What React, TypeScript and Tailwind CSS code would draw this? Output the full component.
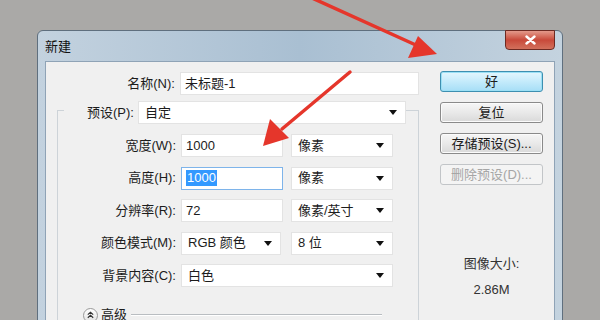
import React from "react";

const font = "font-['Liberation_Sans','Noto_Sans_CJK_SC',sans-serif]";

function Arrow() {
    return (
        <svg className="w-[8px] h-[5px] ml-auto" viewBox="0 0 8 5">
            <path d="M0 0h8L4 5z" fill="#111" />
        </svg>
    );
}

function Field({ value, width, focused }: { value: string; width: string; focused?: boolean }) {
    return (
        <div
            className={`${width} h-[23px] bg-white flex items-center pl-[4px] border ${
                focused ? "border-[#7eb4ea]" : "border-[#e3e3e3]"
            }`}
        >
            {focused ? (
                <span className="bg-[#3399ff] text-white leading-[16px] px-[1px]">{value}</span>
            ) : (
                <span>{value}</span>
            )}
        </div>
    );
}

function Select({ value, width }: { value: string; width: string }) {
    return (
        <div className={`${width} h-[23px] bg-white border border-[#e3e3e3] flex items-center pl-[6px] pr-[8px]`}>
            <span>{value}</span>
            <Arrow />
        </div>
    );
}

function Row({ label, children }: { label: string; children: React.ReactNode }) {
    return (
        <div className="flex items-center h-[23px]">
            <div className="w-[123px] text-right pr-[5px] whitespace-nowrap">{label}</div>
            {children}
        </div>
    );
}

function Button({ label, primary, disabled }: { label: string; primary?: boolean; disabled?: boolean }) {
    const base = "w-[103px] h-[21px] rounded-[3px] flex items-center justify-center border";
    if (primary) {
        return (
            <div className={`${base} border-[#3d8fb0] bg-gradient-to-b from-[#e4f6fd] via-[#c4ebfb] to-[#a6def6] shadow-[inset_0_0_0_1px_#9be0f5]`}>
                {label}
            </div>
        );
    }
    if (disabled) {
        return <div className={`${base} border-[#c2c5c8] bg-[#f4f4f4] text-[#a6a6a6]`}>{label}</div>;
    }
    return (
        <div className={`${base} border-[#8a8a8a] bg-gradient-to-b from-[#f6f6f6] via-[#e9e9e9] to-[#d9d9d9] shadow-[inset_0_0_0_1px_#fbfbfb]`}>
            {label}
        </div>
    );
}

export default function App() {
    return (
        <div className={`relative w-[600px] h-[320px] overflow-hidden bg-[#aaa9a7] pl-[37px] pt-[30px] ${font} text-[13px] text-[#1c1c1c]`}>
            {/* window */}
            <div className="w-[526px] h-[300px] rounded-t-[6px] border border-[#5f6f7e] bg-gradient-to-r from-[#c3d2df] via-[#a9bfd2] to-[#c4d3df] px-[7px]">
                {/* title bar */}
                <div className="flex items-start h-[30px]">
                    <div className="pt-[6px] text-[#111]">新建</div>
                    <div className="ml-auto -mt-[1px] w-[50px] h-[20px] rounded-b-[4px] border border-[#6d2a22] bg-gradient-to-b from-[#e3998b] via-[#c8493a] to-[#d2705c] flex items-center justify-center">
                        <svg width="11" height="10" viewBox="0 0 11 10">
                            <path d="M1.5 1.5l8 7M9.5 1.5l-8 7" stroke="#fff" strokeWidth="2.4" strokeLinecap="round" />
                        </svg>
                    </div>
                </div>

                {/* client */}
                <div className="h-[260px] bg-[#f0f0f0] border border-[#8fa3b6] flex">
                    {/* left side */}
                    <div className="w-[373px]">
                        <div className="mt-[10px] flex items-center h-[23px]">
                            <div className="w-[135px] text-right pr-[5px]">名称(N):</div>
                            <Field value="未标题-1" width="w-[241px]" />
                        </div>

                        <div className="ml-[11px] mt-[15px] border border-[#cdd3d8] border-b-0 h-[220px]">
                            <div className="-mt-[10px] flex items-center h-[23px]">
                                <div className="ml-[6px] bg-[#f0f0f0] pl-[23px] pr-[4px]">预设(P):</div>
                                <Select value="自定" width="w-[268px]" />
                            </div>

                            <div className="mt-[10px] flex flex-col gap-[9.5px]">
                                <Row label="宽度(W):">
                                    <Field value="1000" width="w-[102px]" />
                                    <div className="w-[8px]" />
                                    <Select value="像素" width="w-[102px]" />
                                </Row>
                                <Row label="高度(H):">
                                    <Field value="1000" width="w-[102px]" focused />
                                    <div className="w-[8px]" />
                                    <Select value="像素" width="w-[102px]" />
                                </Row>
                                <Row label="分辨率(R):">
                                    <Field value="72" width="w-[102px]" />
                                    <div className="w-[8px]" />
                                    <Select value="像素/英寸" width="w-[102px]" />
                                </Row>
                                <Row label="颜色模式(M):">
                                    <Select value="RGB 颜色" width="w-[100px]" />
                                    <div className="w-[10px]" />
                                    <Select value="8 位" width="w-[102px]" />
                                </Row>
                                <Row label="背景内容(C):">
                                    <Select value="白色" width="w-[212px]" />
                                </Row>
                            </div>

                            <div className="mt-[20px] flex items-center ml-[25px] h-[16px]">
                                <div className="w-[15px] h-[15px] rounded-full border border-[#9a9a9a] bg-gradient-to-b from-white to-[#e2e2e2] flex items-center justify-center">
                                    <svg width="7" height="8" viewBox="0 0 7 8">
                                        <path d="M0.8 3.6L3.5 1.2 6.2 3.6M0.8 6.8L3.5 4.4 6.2 6.8" fill="none" stroke="#333" strokeWidth="1.2" />
                                    </svg>
                                </div>
                                <span className="ml-[3px]">高级</span>
                                <div className="ml-[4px] w-[251px] h-[2px] border-t border-[#b9bdc1] border-b-white border-b" />
                            </div>
                        </div>
                    </div>

                    {/* right side */}
                    <div className="flex-1 pl-[21px] pt-[9px]">
                        <div className="flex flex-col gap-[10px]">
                            <Button label="好" primary />
                            <Button label="复位" />
                            <Button label="存储预设(S)..." />
                            <Button label="删除预设(D)..." disabled />
                        </div>
                        <div className="w-[103px] mt-[69px] flex flex-col items-center text-[#333]">
                            <div>图像大小:</div>
                            <div className="mt-[6px]">2.86M</div>
                        </div>
                    </div>
                </div>
            </div>

            {/* red annotation arrows */}
            <svg className="absolute inset-0 pointer-events-none" width="600" height="320" viewBox="0 0 600 320">
                <path d="M312 -2L418 46" stroke="#e5362b" strokeWidth="3.5" strokeLinecap="round" />
                <path d="M437 54L408 58L418 36z" fill="#e5362b" />
                <path d="M350 72L282 129" stroke="#e5362b" strokeWidth="3.5" strokeLinecap="round" />
                <path d="M263 146L270 119L289 138z" fill="#e5362b" />
            </svg>
        </div>
    );
}
